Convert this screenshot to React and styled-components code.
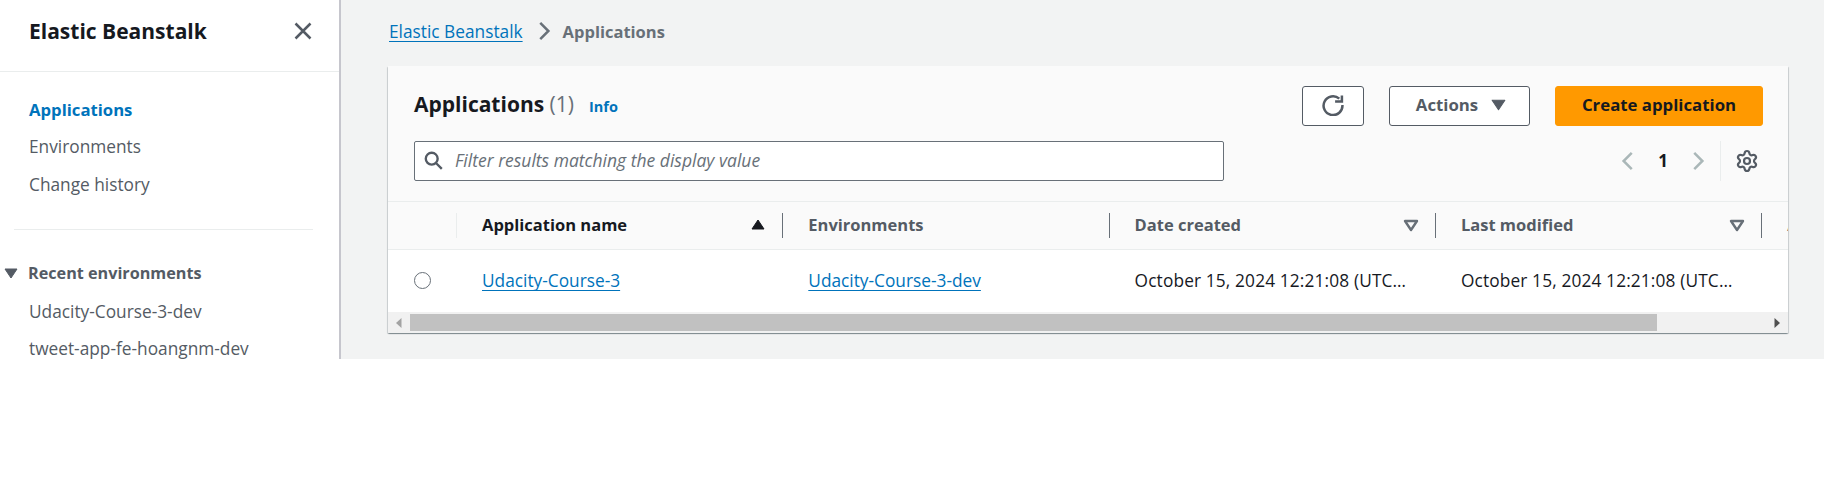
import React from 'react';
import styled, { createGlobalStyle } from 'styled-components';
import { Settings } from 'lucide-react';

const GlobalStyle = createGlobalStyle`
  html, body {
    margin: 0;
    padding: 0;
    background: #fff;
    font-family: "Open Sans", "Noto Sans", sans-serif;
  }
  * { box-sizing: border-box; }
`;

const Page = styled.div`
  display: flex;
  height: 359px;
  overflow: hidden;
  background: #f2f3f3;
`;

const Sidebar = styled.aside`
  width: 341px;
  flex: none;
  background: #fff;
  border-right: 2px solid #c6c6cd;
  overflow: hidden;
`;

const SideHeader = styled.div`
  height: 72px;
  display: flex;
  align-items: center;
  justify-content: space-between;
  padding: 0 26px 10px 29px;
  border-bottom: 1px solid #eaeded;
`;

const SideTitle = styled.h2`
  margin: 0;
  font-size: 21px;
  font-weight: 700;
  color: #16191f;
`;

const NavList = styled.nav`
  display: flex;
  flex-direction: column;
  padding: ${p => p.$top ?? 19}px 0 0 29px;
`;

const NavItem = styled.a`
  height: 37.5px;
  flex: none;
  display: flex;
  align-items: center;
  padding-bottom: 1px;
  font-size: ${p => (p.$active ? 16.7 : 17.3)}px;
  font-weight: ${p => (p.$active ? 700 : 400)};
  color: ${p => (p.$active ? '#0073bb' : '#545b64')};
`;

const SideDivider = styled.div`
  height: 1px;
  margin: 25.5px 26px 0 14px;
  background: #eaeded;
`;

const RecentHead = styled.div`
  display: flex;
  align-items: center;
  gap: 9px;
  margin: 34px 0 11px 3px;
  height: 18px;
  font-size: 16.2px;
  font-weight: 700;
  color: #545b64;
`;

const Main = styled.main`
  flex: 1;
  padding: 20px 36px 0 47px;
  min-width: 0;
`;

const Breadcrumbs = styled.div`
  display: flex;
  align-items: center;
  height: 22px;
  margin: 0 0 24px 1px;
`;

const CrumbSep = styled.span`
  display: flex;
  margin: 0 9px 0 11px;
`;

const TextLink = styled.a`
  color: #0073bb;
  font-size: 17.3px;
  text-decoration: underline;
  text-underline-offset: 3px;
  text-decoration-thickness: 1px;
  text-decoration-skip-ink: none;
`;

const Current = styled.span`
  font-size: 16.5px;
  font-weight: 700;
  color: #687078;
`;

const Card = styled.section`
  background: #fff;
  border-radius: 1px;
  box-shadow: 0 1px 1px 0 rgba(0, 28, 36, 0.3), 1px 1px 1px 0 rgba(0, 28, 36, 0.15), -1px 1px 1px 0 rgba(0, 28, 36, 0.15);
  overflow: hidden;
`;

const CardHead = styled.header`
  background: #fafafa;
  padding: 20px 25px 0 26px;
  height: 136px;
  border-bottom: 1px solid #eaeded;
`;

const TopRow = styled.div`
  display: flex;
  align-items: center;
  justify-content: space-between;
  height: 40px;
`;

const TitleWrap = styled.div`
  display: flex;
  align-items: baseline;
  gap: 15px;
  margin-bottom: 4px;
`;

const Title = styled.h1`
  margin: 0;
  font-size: 21px;
  font-weight: 700;
  color: #16191f;
`;

const Count = styled.span`
  font-weight: 400;
  color: #687078;
`;

const InfoLink = styled.a`
  font-size: 14.5px;
  font-weight: 700;
  color: #0073bb;
`;

const Actions = styled.div`
  display: flex;
  gap: 25px;
`;

const Btn = styled.button`
  height: 40px;
  display: flex;
  align-items: center;
  justify-content: center;
  gap: 12px;
  width: ${p => p.$w}px;
  padding: 0 0 3px ${p => p.$shift ?? 0}px;
  border-radius: 3px;
  border: 1px solid ${p => (p.$primary ? '#ff9900' : '#545b64')};
  background: ${p => (p.$primary ? '#ff9900' : '#fff')};
  color: ${p => (p.$primary ? '#16191f' : '#545b64')};
  font: 700 16.8px "Open Sans", "Noto Sans", sans-serif;
`;

const FilterRow = styled.div`
  display: flex;
  align-items: center;
  justify-content: space-between;
  margin-top: 15px;
`;

const Search = styled.div`
  width: 810px;
  height: 40px;
  display: flex;
  align-items: center;
  gap: 12px;
  padding: 0 0 2px 9px;
  background: #fff;
  border: 1px solid #687078;
  border-radius: 2px;
  font-size: 17.5px;
  font-style: italic;
  color: #687078;
`;

const Pager = styled.div`
  display: flex;
  align-items: center;
  height: 40px;
  margin-right: 4px;
  color: #16191f;
  font-size: 17px;
  font-weight: 700;
`;

const PageNum = styled.span`
  width: 50px;
  padding-bottom: 2px;
  text-align: center;
`;

const PagerSplit = styled.div`
  width: 1px;
  height: 40px;
  margin: 0 14px 0 12px;
  background: #eaeded;
`;

const GearIcon = styled(Settings)`
  display: block;
  flex: none;
  color: #545b64;
`;

const HeadRow = styled.div`
  display: flex;
  height: 48px;
  background: #fafafa;
  border-bottom: 1px solid #eaeded;
  overflow: hidden;
`;

const BodyRow = styled.div`
  display: flex;
  height: 62px;
  background: #fff;
`;

const SelectCell = styled.div`
  width: 68px;
  flex: none;
  display: flex;
  align-items: center;
  padding: 0 0 2px 26px;
`;

const Radio = styled.span`
  width: 17px;
  height: 17px;
  border-radius: 50%;
  border: 1.5px solid #687078;
`;

const HeadSplit = styled.div`
  width: 1px;
  height: 25px;
  flex: none;
  align-self: center;
  background: ${p => (p.$light ? '#eaeded' : '#687078')};
`;

const HeadCell = styled.div`
  width: 325.3px;
  flex: none;
  display: flex;
  align-items: center;
  justify-content: space-between;
  padding: 0 16px 2px 25px;
  font-size: 16.5px;
  font-weight: 700;
  color: ${p => (p.$sorted ? '#16191f' : '#545b64')};
`;

const BodyCell = styled.div`
  width: 326.3px;
  flex: none;
  display: flex;
  align-items: center;
  padding: 0 24px 2px 26px;
  font-size: 17.3px;
  color: #16191f;
  white-space: nowrap;
  overflow: hidden;
`;

const Ellipsis = styled.span`
  overflow: hidden;
  text-overflow: ellipsis;
  letter-spacing: 0.14px;
`;

const ScrollBar = styled.div`
  height: 21px;
  display: flex;
  align-items: center;
  justify-content: space-between;
  padding: 0 7px;
  position: relative;
  background: #f1f1f1;
`;

const ScrollThumb = styled.div`
  position: absolute;
  left: 22px;
  top: 2px;
  bottom: 2px;
  width: 1247px;
  background: #c1c1c1;
`;

const Glyph = styled.svg`
  flex: none;
  display: block;
`;

const Caret = ({ size = 14, color = '#545b64', up, hollow }) => (
  <Glyph width={size} height={size} viewBox="0 0 16 16">
    <path
      d={up ? 'M8 3 L14 12 H2 Z' : 'M2 4 H14 L8 13 Z'}
      fill={hollow ? 'none' : color}
      stroke={color}
      strokeWidth={hollow ? 2.4 : 1}
      strokeLinejoin="round"
    />
  </Glyph>
);

const Line = ({ d, size = 16, box = 16, color = '#545b64', width = 2 }) => (
  <Glyph width={size} height={size} viewBox={`0 0 ${box} ${box}`} fill="none" stroke={color} strokeWidth={width}>
    <path d={d} />
  </Glyph>
);

const ScrollArrow = ({ left, color }) => (
  <Glyph width="7" height="10" viewBox="0 0 7 10">
    <path d={left ? 'M6.5 0 V10 L1 5 Z' : 'M0.5 0 V10 L6 5 Z'} fill={color} />
  </Glyph>
);

const App = () => (
  <>
    <GlobalStyle />
    <Page>
      <Sidebar>
        <SideHeader>
          <SideTitle>Elastic Beanstalk</SideTitle>
          <Line d="M2 2 L14 14 M14 2 L2 14" size={20} />
        </SideHeader>
        <NavList>
          <NavItem $active>Applications</NavItem>
          <NavItem>Environments</NavItem>
          <NavItem>Change history</NavItem>
        </NavList>
        <SideDivider />
        <RecentHead>
          <Caret size={16} />
          Recent environments
        </RecentHead>
        <NavList $top={0}>
          <NavItem>Udacity-Course-3-dev</NavItem>
          <NavItem>tweet-app-fe-hoangnm-dev</NavItem>
        </NavList>
      </Sidebar>
      <Main>
        <Breadcrumbs>
          <TextLink>Elastic Beanstalk</TextLink>
          <CrumbSep>
            <Line d="M5 1.5 L11.5 8 L5 14.5" size={20} color="#687078" />
          </CrumbSep>
          <Current>Applications</Current>
        </Breadcrumbs>
        <Card>
          <CardHead>
            <TopRow>
              <TitleWrap>
                <Title>Applications <Count>(1)</Count></Title>
                <InfoLink>Info</InfoLink>
              </TitleWrap>
              <Actions>
                <Btn $w={62} aria-label="Refresh">
                  <Line d="M19.5 10.5 A9 9 0 1 1 16.5 4.4 M19 1.5 V7.2 H12.5" size={22} box={21} width={2.4} />
                </Btn>
                <Btn $w={141} $shift={4}>Actions <Caret size={17} /></Btn>
                <Btn $w={208} $primary>Create application</Btn>
              </Actions>
            </TopRow>
            <FilterRow>
              <Search>
                <Line d="M10.5 10.5 L15 15 M11.5 6.5 A5 5 0 1 1 1.5 6.5 A5 5 0 1 1 11.5 6.5" size={19} />
                Filter results matching the display value
              </Search>
              <Pager>
                <Line d="M11 1.5 L4.5 8 L11 14.5" size={20} color="#aab7b8" />
                <PageNum>1</PageNum>
                <Line d="M5 1.5 L11.5 8 L5 14.5" size={20} color="#aab7b8" />
                <PagerSplit />
                <GearIcon size={24} strokeWidth={2.2} />
              </Pager>
            </FilterRow>
          </CardHead>
          <HeadRow>
            <SelectCell />
            <HeadSplit $light />
            <HeadCell $sorted>Application name <Caret size={16} color="#16191f" up /></HeadCell>
            <HeadSplit />
            <HeadCell>Environments</HeadCell>
            <HeadSplit />
            <HeadCell>Date created <Caret size={16} color="#687078" hollow /></HeadCell>
            <HeadSplit />
            <HeadCell>Last modified <Caret size={16} color="#687078" hollow /></HeadCell>
            <HeadSplit />
            <HeadCell>Actions</HeadCell>
          </HeadRow>
          <BodyRow>
            <SelectCell><Radio /></SelectCell>
            <BodyCell><TextLink>Udacity-Course-3</TextLink></BodyCell>
            <BodyCell><TextLink>Udacity-Course-3-dev</TextLink></BodyCell>
            <BodyCell><Ellipsis>October 15, 2024 12:21:08 (UTC+07:00)</Ellipsis></BodyCell>
            <BodyCell><Ellipsis>October 15, 2024 12:21:08 (UTC+07:00)</Ellipsis></BodyCell>
          </BodyRow>
          <ScrollBar>
            <ScrollThumb />
            <ScrollArrow left color="#a3a3a3" />
            <ScrollArrow color="#505050" />
          </ScrollBar>
        </Card>
      </Main>
    </Page>
  </>
);

export default App;
